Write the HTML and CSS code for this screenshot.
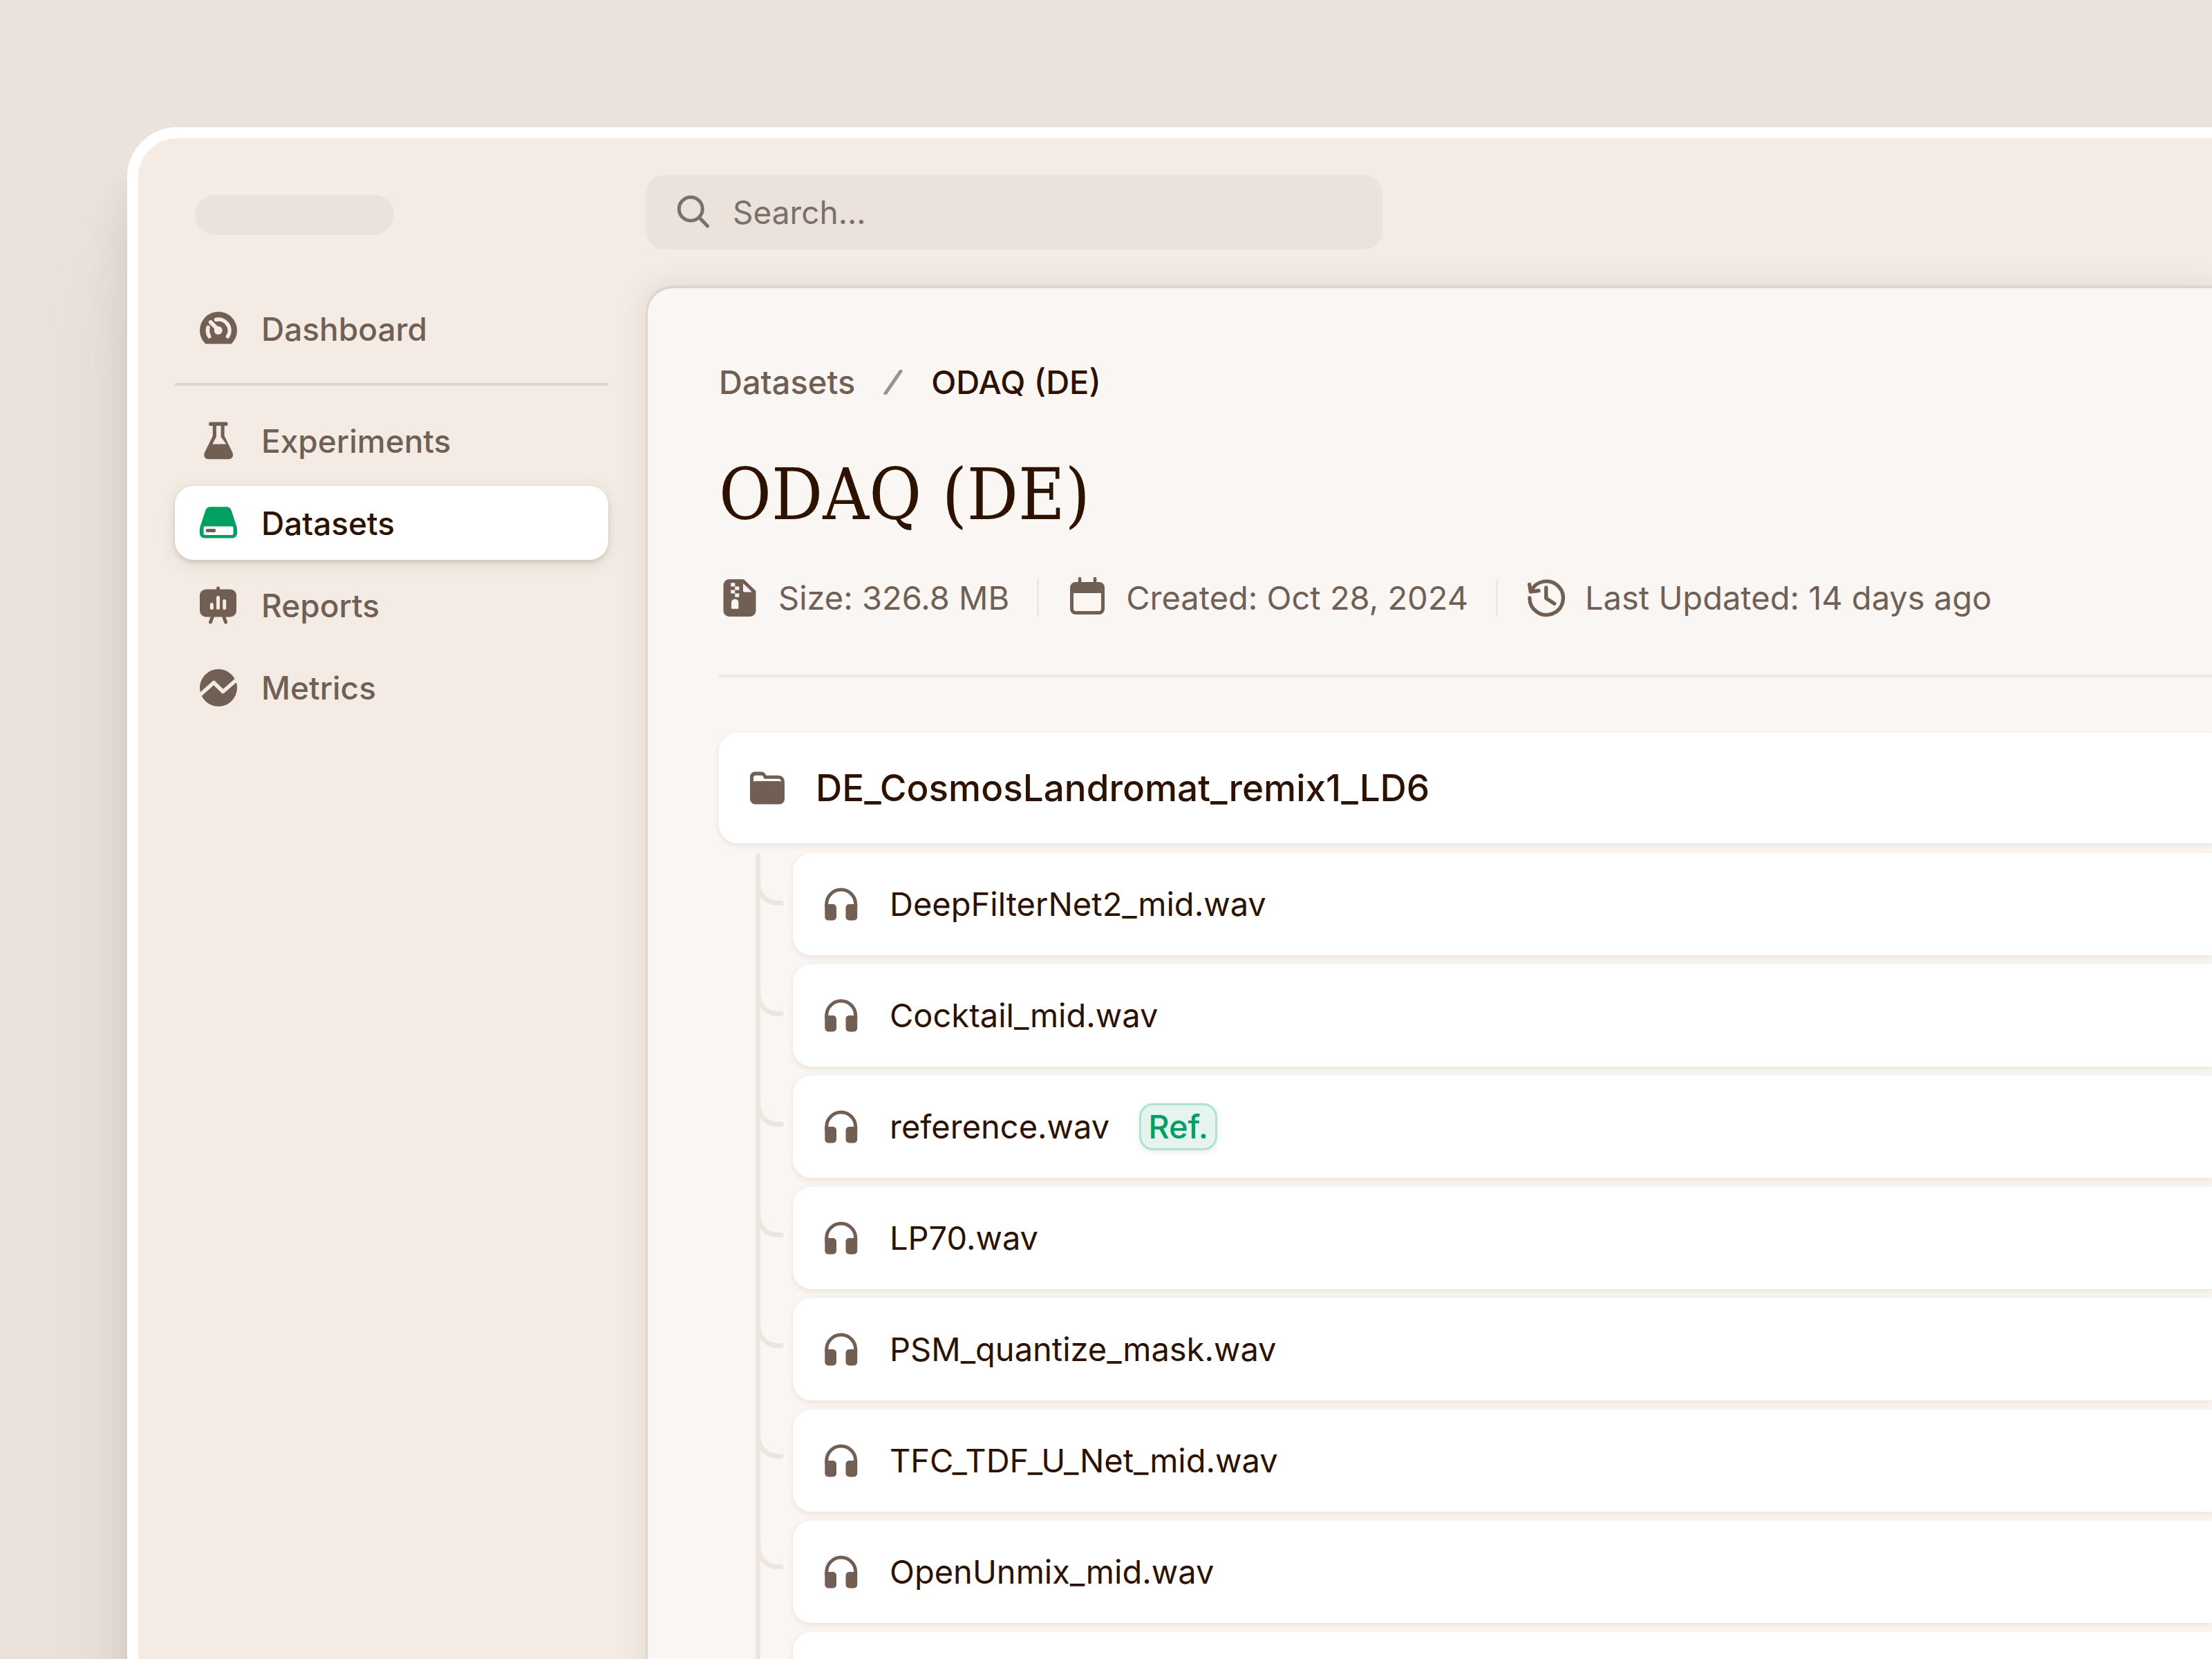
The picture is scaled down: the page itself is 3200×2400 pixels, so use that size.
FILE: index.html
```html
<!DOCTYPE html>
<html lang="en">
<head>
<meta charset="utf-8">
<title>ODAQ (DE) – Datasets</title>
<link rel="stylesheet" href="styles.css">
</head>
<body>
<svg class="sprite" aria-hidden="true">
  <symbol id="i-headphones" viewBox="0 0 54 54">
    <path d="M5.700 32V27a21 21 0 0 1 42 0V32" fill="none" stroke="currentColor" stroke-width="5"/>
    <path d="M3.300 27H15a5 5 0 0 1 5 5V45.500a5 5 0 0 1-5 5H8.300a5 5 0 0 1-5-5ZM50.200 27H38.500a5 5 0 0 0-5 5V45.500a5 5 0 0 0 5 5h6.700a5 5 0 0 0 5-5Z"/>
  </symbol>
  <symbol id="i-branch" viewBox="0 0 42 160">
    <path d="M4 40V44.500a28 28 0 0 0 28 28h5" fill="none" stroke="currentColor" stroke-width="7" stroke-linecap="round"/>
  </symbol>
</svg>

<div class="window">
  <aside class="sidebar">
    <div class="brand"></div>
    <nav class="nav" aria-label="Main">
      <a class="nav-item" href="#">
        <svg class="icon" viewBox="0 0 54 54"><path d="M8.300 48.500a27 27 0 1 1 37.400 0Z"/><g fill="none" class="cut" stroke-linecap="round"><path stroke-width="5.600" d="M23.500 13.400a16 16 0 0 1 17 24.300M12 24.700a17 17 0 0 0 1.800 13"/><path stroke-width="6" d="M15.800 17.200 26.500 28"/></g><circle class="hole" cx="26.700" cy="29" r="6"/></svg>
        Dashboard
      </a>
      <hr class="nav-rule">
      <a class="nav-item" href="#">
        <svg class="icon" viewBox="0 0 54 54"><path fill-rule="evenodd" d="M15.800-.500h22a2.800 2.800 0 0 1 0 5.600H35.600V19.500L47.200 43.500c2.500 5.200-.500 9.700-5.500 9.700H12.600c-5 0-8-4.500-5.500-9.700L18.800 19.500V5.100H15.800a2.800 2.800 0 0 1 0-5.600ZM23.900 5.100V21L18.300 31.500H38.300L30.600 21V5.100Z"/></svg>
        Experiments
      </a>
      <a class="nav-item active" href="#" aria-current="page">
        <svg class="icon" viewBox="0 0 54 54"><path class="green" fill-rule="evenodd" d="M15.500 3.200h23c4 0 6.500 2.300 7.500 6L53.300 31.500c.500 1.500.700 3 .700 4.500v6a6.500 6.500 0 0 1-6.500 6.500h-41A6.500 6.500 0 0 1 0 42v-6c0-1.500.200-3 .700-4.500L8 9.200c1-3.700 3.500-6 7.500-6ZM7.500 31.400a2 2 0 0 0-2 2v8.500a2 2 0 0 0 2 2h39a2 2 0 0 0 2-2v-8.500a2 2 0 0 0-2-2Z"/><rect x="8.700" y="35" width="14.500" height="5" rx="2.500"/></svg>
        Datasets
      </a>
      <a class="nav-item" href="#">
        <svg class="icon" viewBox="0 0 54 54"><rect x="0" y="3.400" width="53" height="40" rx="9"/><g fill="none" stroke="currentColor" stroke-width="5" stroke-linecap="round"><path d="M26.500 5V2M18 44l-2.500 7M35 44l2.500 7"/></g><g class="cut" stroke-width="5" stroke-linecap="round"><path d="M17.300 25.500v5M26.500 15.500v15M35.700 20.500v10"/></g></svg>
        Reports
      </a>
      <a class="nav-item" href="#">
        <svg class="icon" viewBox="0 0 54 54"><circle cx="27" cy="27" r="27"/><path class="cut" fill="none" stroke-width="5.600" stroke-linejoin="round" d="M-1 38.500 20.300 19.500 33.500 32.500 56 13"/></svg>
        Metrics
      </a>
    </nav>
  </aside>

  <div class="main">
    <label class="search">
      <svg class="icon" viewBox="0 0 54 54" fill="none" stroke="currentColor" stroke-width="5" stroke-linecap="round"><circle cx="22.300" cy="22.300" r="17"/><path d="M34.500 34.500 46.500 47"/></svg>
      <input type="search" placeholder="Search…" aria-label="Search">
    </label>

    <main class="panel">
      <nav class="crumbs" aria-label="Breadcrumb">
        <a href="#">Datasets</a>
        <svg class="slash" viewBox="0 0 28 36" aria-hidden="true"><path d="M3 34 25 2" fill="none" stroke="currentColor" stroke-width="5" stroke-linecap="round"/></svg>
        <span aria-current="page">ODAQ (DE)</span>
      </nav>
      <h1 class="title">ODAQ (DE)</h1>
      <ul class="meta">
        <li>
          <svg class="icon" viewBox="0 0 54 54"><path fill-rule="evenodd" d="M12 0H33L50.500 17V45.500a8.500 8.500 0 0 1-8.500 8.500H12a8.500 8.500 0 0 1-8.500-8.500V8.500A8.500 8.500 0 0 1 12 0ZM14.300 5.300v5.200h6v5h-6v5h6v5.300h6v-5.300h-6v-5h6v-5h-6v-5.200ZM20.200 28.700a5 5 0 0 0-5.200 5v7.500a1.500 1.500 0 0 0 1.500 1.500h7.400a1.500 1.500 0 0 0 1.500-1.500v-7.500a5 5 0 0 0-5.200-5ZM32 6V16.600a2 2 0 0 0 2 2H45Z"/></svg>
          Size: 326.8 MB
        </li>
        <li>
          <svg class="icon" viewBox="0 0 54 54"><path fill-rule="evenodd" d="M10 4H44a8 8 0 0 1 8 8V43a8 8 0 0 1-8 8H10a8 8 0 0 1-8-8V12a8 8 0 0 1 8-8ZM7 20V42.500a3.500 3.500 0 0 0 3.500 3.500h33a3.500 3.500 0 0 0 3.500-3.500V20Z"/><path d="M16 6V-1M38 6V-1" stroke="currentColor" stroke-width="4.600" stroke-linecap="round"/></svg>
          Created: Oct 28, 2024
        </li>
        <li>
          <svg class="icon" viewBox="0 0 54 54" fill="none" stroke="currentColor" stroke-width="5.300" stroke-linecap="round" stroke-linejoin="round"><path d="M2.800 27A24.300 24.300 0 1 0 4.900 17.300M2.500 7.500 4.300 18 16 16.500M26.700 12V27.500L38.700 35.300"/></svg>
          Last Updated: 14 days ago
        </li>
      </ul>
      <hr class="rule">

      <section class="folder">
        <h2 class="folder-head">
          <svg class="icon" viewBox="0 0 54 54"><path fill-rule="evenodd" d="M9 3.500h9c4 0 6 2 7.300 5.200H43a9 9 0 0 1 9 9V43a7.500 7.500 0 0 1-7.500 7.500h-35A7.500 7.500 0 0 1 2 43V10.500a7 7 0 0 1 7-7ZM10.500 8.700A3.500 3.500 0 0 0 7 12.200v6.300q.500-1.500 2-1.500H45q1.500 0 2 1.500 0-4.800-4-4.800H24q-1.500 0-2.200-1.500l-.500-1.500q-.800-2-3-2Z"/></svg>
          DE_CosmosLandromat_remix1_LD6
        </h2>
        <div class="tree">
          <div class="rail" aria-hidden="true">
            <svg><use href="#i-branch"/></svg><svg><use href="#i-branch"/></svg><svg><use href="#i-branch"/></svg><svg><use href="#i-branch"/></svg><svg><use href="#i-branch"/></svg><svg><use href="#i-branch"/></svg><svg><use href="#i-branch"/></svg>
          </div>
          <ul class="files">
            <li><svg class="icon"><use href="#i-headphones"/></svg>DeepFilterNet2_mid.wav</li>
            <li><svg class="icon"><use href="#i-headphones"/></svg>Cocktail_mid.wav</li>
            <li><svg class="icon"><use href="#i-headphones"/></svg>reference.wav <span class="badge">Ref.</span></li>
            <li><svg class="icon"><use href="#i-headphones"/></svg>LP70.wav</li>
            <li><svg class="icon"><use href="#i-headphones"/></svg>PSM_quantize_mask.wav</li>
            <li><svg class="icon"><use href="#i-headphones"/></svg>TFC_TDF_U_Net_mid.wav</li>
            <li><svg class="icon"><use href="#i-headphones"/></svg>OpenUnmix_mid.wav</li>
            <li></li>
          </ul>
        </div>
      </section>
    </main>
  </div>
</div>
</body>
</html>
```
FILE: styles.css
```css
* { box-sizing: border-box; }

:root {
  --ink: #2e1200;
  --muted: #725f53;
  --green: #00a063;
  --frame: #f3ebe4;
  --fill: #ebe2dc;
  --panel: #faf6f3;
}

body {
  margin: 0;
  height: 100vh;
  overflow: hidden;
  padding: 184px 0 0 184px;
  background: var(--fill);
  color: var(--muted);
  font: 400 47px/54px Inter, "Liberation Sans", sans-serif;
}

h1, h2, ul { margin: 0; padding: 0; font-weight: inherit; }
ul { list-style: none; }
hr { border: 0; margin: 0; }
a { color: inherit; text-decoration: none; }

.sprite { display: none; }

.icon {
  flex: none;
  width: 54px;
  height: 54px;
  overflow: visible;
}
.icon:not([fill]) { fill: currentColor; }

.window {
  display: grid;
  grid-template-columns: 734px 1fr;
  min-height: 100%;
  border: 16px solid #fff;
  border-width: 16px 0 0 16px;
  border-radius: 72px 0 0 0;
  background: var(--frame);
  box-shadow: 0 160px 160px rgba(90, 60, 40, .07), 0 70px 54px rgba(60, 60, 40, .13);
}

/* Sidebar */
.sidebar { padding: 82px 54px 0 53px; }

.brand {
  width: 288px;
  height: 58px;
  margin: 0 0 82px 29px;
  border-radius: 29px;
  background: var(--fill);
}

.nav {
  display: flex;
  flex-direction: column;
  gap: 12px;
  font-size: 46px;
  font-weight: 500;
}

.nav-item {
  display: flex;
  align-items: center;
  gap: 35px;
  height: 107px;
  padding: 0 36px;
  border-radius: 27px;
}
.nav-item .cut { stroke: var(--frame); }
.nav-item .hole { fill: var(--frame); }
.nav-item.active {
  background: #fff;
  color: var(--ink);
  box-shadow: 0 3px 6px rgba(90, 50, 30, .18), 0 6px 27px rgba(90, 90, 60, .1);
}
.nav-item.active .icon { color: var(--muted); }
.nav-item .green { fill: var(--green); }

.nav-rule {
  height: 4px;
  margin: 13px 0 14px;
  background: #ddd6cf;
}

/* Main column */
.main {
  display: flex;
  flex-direction: column;
  min-width: 0;
  padding-top: 53px;
}

.search {
  display: flex;
  align-items: center;
  gap: 29px;
  width: 100%;
  max-width: 1066px;
  height: 108px;
  margin-bottom: 52px;
  padding: 0 43px;
  border-radius: 27px;
  background: var(--fill);
  color: #7b7069;
  font-size: 46px;
}
.search input {
  flex: 1;
  min-width: 0;
  border: 0;
  padding: 0;
  outline: 0;
  background: none;
  color: inherit;
  font: inherit;
  appearance: none;
}
.search input::placeholder { color: inherit; opacity: 1; }

.panel {
  flex: 1;
  padding: 109px 0 0 103px;
  border: 4px solid #ddd6ce;
  border-width: 4px 0 0 3px;
  border-radius: 40px 0 0 0;
  background: var(--panel);
  box-shadow: 0 0 40px rgba(110, 110, 70, .13);
}

.crumbs {
  display: flex;
  align-items: center;
  gap: 41px;
  font-weight: 500;
}
.crumbs span { color: var(--ink); }
.slash { width: 28px; height: 36px; opacity: .65; }

.title {
  margin: 75px 0 63px;
  color: var(--ink);
  font: 400 103px/120px "DejaVu Serif Condensed", "DejaVu Serif", serif;
}

.meta {
  display: flex;
  padding-left: 3px;
  white-space: nowrap;
}
.meta li {
  display: flex;
  align-items: center;
  gap: 29px;
}
.meta li + li {
  margin-left: 40px;
  padding-left: 43px;
  border-left: 3px solid #ece8e5;
}

.rule {
  height: 4px;
  margin: 84px 0 80px;
  background: #ece8e5;
}

/* Folder tree */
.folder-head, .files li {
  display: flex;
  align-items: center;
  gap: 43px;
  padding: 0 43px;
  border-radius: 27px 0 0 27px;
  background: #fff;
  color: var(--ink);
  box-shadow: 0 3px 10px rgba(90, 60, 40, .1);
}
.folder-head .icon, .files .icon { color: var(--muted); }

.folder-head {
  height: 160px;
  font-size: 53px;
  font-weight: 500;
}

.tree {
  display: flex;
  padding: 14px 0 0 53px;
}

.rail {
  width: 54px;
  border-left: 7px solid #ede6de;
  border-radius: 4px 0 0 0;
  color: #ede6de;
}
.rail svg {
  display: block;
  width: 42px;
  height: 160px;
  margin-left: -7px;
}

.files {
  flex: 1;
  display: flex;
  flex-direction: column;
  gap: 13px;
}
.files li { height: 148px; }

.badge {
  padding: 4px 10px;
  border: 3px solid #afe2cf;
  border-radius: 20px;
  background: #e6f4ef;
  color: var(--green);
  font-weight: 500;
  box-shadow: 0 3px 8px rgba(60, 70, 50, .1);
}
```
